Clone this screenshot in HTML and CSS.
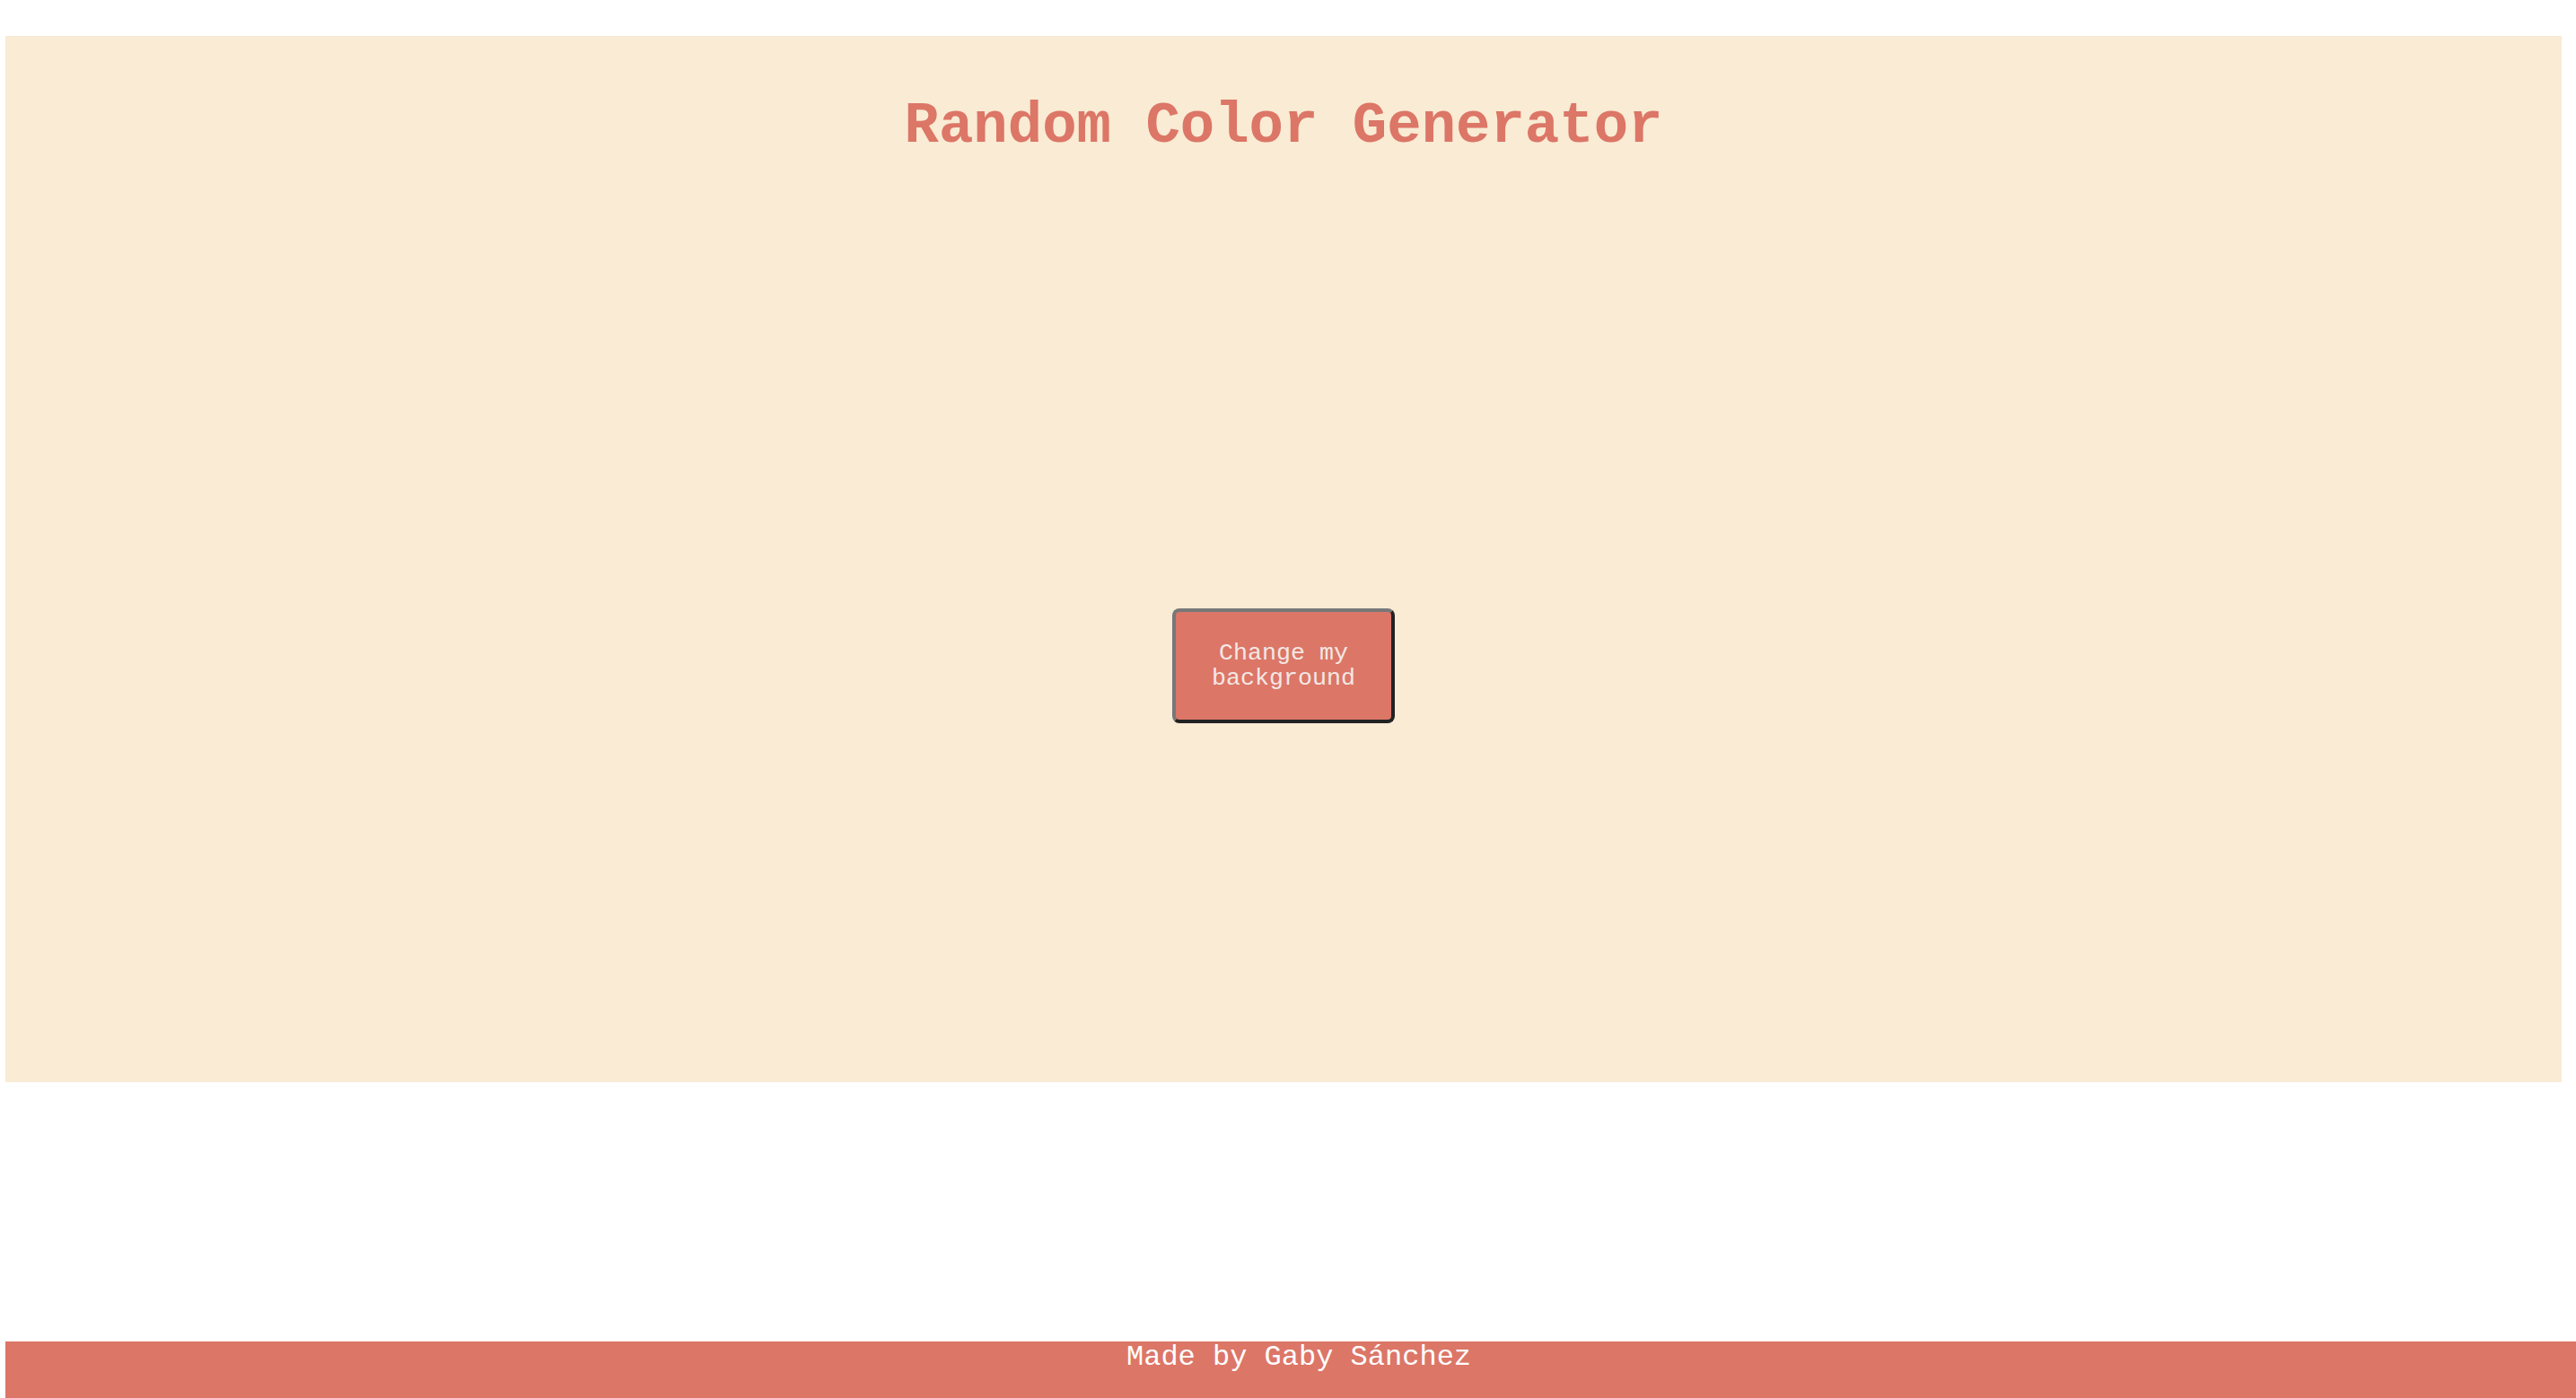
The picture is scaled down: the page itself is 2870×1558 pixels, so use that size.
FILE: index.html
```html
<!DOCTYPE html>
<html lang="en">
<head>
<meta charset="utf-8">
<title>Random Color Generator</title>
<link rel="stylesheet" href="styles.css">
</head>
<body>
<main class="panel">
  <h1 class="title">Random Color Generator</h1>
  <div class="action">
    <button class="change-btn" type="button">Change my background</button>
  </div>
</main>
<footer class="footer">Made by Gaby Sánchez</footer>
</body>
</html>
```

FILE: styles.css
```css
html {
  overflow: hidden;
}

body {
  margin: 0;
  padding: 0 16px 0 6px;
  min-height: 100vh;
  display: flex;
  flex-direction: column;
  background: #ffffff;
  font-family: "Courier New", "Liberation Mono", monospace;
  box-sizing: border-box;
}

.panel {
  margin-top: 40px;
  height: 1166px;
  box-sizing: border-box;
  padding-top: 65px;
  background: #f9ebd4;
  display: flex;
  flex-direction: column;
  align-items: center;
}

.title {
  margin: 0;
  font-size: 64px;
  line-height: 72px;
  font-weight: bold;
  color: #dc7667;
  text-align: center;
}

.action {
  margin-top: 501px;
  display: flex;
  justify-content: center;
}

.change-btn {
  width: 248px;
  height: 128px;
  box-sizing: border-box;
  padding: 0 16px;
  background: #dc7667;
  color: #f3e8e5;
  font-family: "Courier New", "Liberation Mono", monospace;
  font-size: 26.67px;
  line-height: 28px;
  border-width: 4px;
  border-style: solid;
  border-color: #787878 #222222 #222222 #787878;
  border-radius: 8px;
  text-align: center;
  cursor: pointer;
}

.footer {
  margin-top: auto;
  width: 2870px;
  height: 63px;
  padding-left: 6px;
  flex-shrink: 0;
  background: #dc7667;
  color: #ffffff;
  font-size: 32px;
  line-height: 36px;
  text-align: center;
}
```
